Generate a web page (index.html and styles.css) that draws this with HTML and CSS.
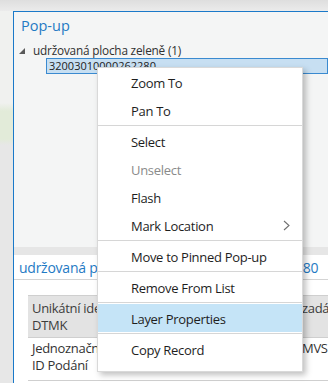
FILE: index.html
```html
<!DOCTYPE html>
<html lang="cs">
<head>
  <meta charset="UTF-8">
  <meta name="viewport" content="width=device-width, initial-scale=1.0">
  <title>Pop-up</title>
  <link rel="stylesheet" href="styles.css">
</head>
<body>
  <div class="topbar"></div>
  <div class="main">
    <div class="map"></div>
    <section class="panel">
      <div class="tree-pane">
        <h1 class="title">Pop-up</h1>
        <div class="tree-row">
          <svg class="twist" width="6" height="6" viewBox="0 0 6 6"><polygon points="6,0 6,6 0,6" fill="#595959"/></svg>
          <span>udržovaná plocha zeleně (1)</span>
        </div>
        <div class="feature-row">
          <span class="feature">32003010000262280</span>
        </div>
      </div>
      <div class="splitter"></div>
      <div class="details">
        <div class="details-title">udržovaná plocha zeleně - 32003010000262280</div>
        <div class="attr-table">
          <div class="cell head">Unikátní identifikátor<br>DTMK</div>
          <div class="cell head">zadání</div>
          <div class="cell">Jednoznačné<br>ID Podání</div>
          <div class="cell">MVS</div>
        </div>
      </div>
    </section>
  </div>

  <ul class="menu">
    <li class="item">Zoom To</li>
    <li class="item">Pan To</li>
    <li class="sep"></li>
    <li class="item">Select</li>
    <li class="item disabled">Unselect</li>
    <li class="item">Flash</li>
    <li class="item">Mark Location
      <svg class="chevron" width="7" height="11" viewBox="0 0 7 11"><path d="M1 1 L6 5.5 L1 10" fill="none" stroke="#707070" stroke-width="1.1"/></svg>
    </li>
    <li class="sep"></li>
    <li class="item">Move to Pinned Pop-up</li>
    <li class="sep"></li>
    <li class="item">Remove From List</li>
    <li class="sep"></li>
    <li class="item active">Layer Properties</li>
    <li class="sep"></li>
    <li class="item">Copy Record</li>
  </ul>
</body>
</html>
```

FILE: styles.css
```css
body {
  margin: 0;
  width: 328px;
  height: 383px;
  overflow: hidden;
  background-color: #e8e8e8;
  font-family: "Open Sans", Arial, sans-serif;
  color: #222;
}
.topbar {
  height: 11px;
  background: linear-gradient(#dedede, #ebebeb);
}
.main {
  display: flex;
  height: 372px;
}
.map {
  flex: 0 0 13px;
  background: linear-gradient(#f0f1ef 0, #f0f1ef 92px, #e2ebd9 100px, #e2ebd9 128px, #e7e7e7 134px);
}
.panel {
  flex: 1;
  min-width: 0;
  overflow: hidden;
  display: flex;
  flex-direction: column;
  border-top: 1px solid #1a79c9;
  border-left: 1px solid #1a79c9;
  background-color: #f4f5f5;
}
.tree-pane {
  height: 235px;
}
.title {
  margin: 0;
  padding: 4px 0 0 7px;
  font-size: 14.5px;
  font-weight: normal;
  line-height: 20px;
  color: #1f7ac4;
}
.tree-row {
  display: flex;
  align-items: center;
  margin-top: 6px;
  padding-left: 5px;
  height: 16px;
  font-size: 11.8px;
  letter-spacing: -0.2px;
  color: #303030;
}
.twist {
  margin-right: 8px;
  margin-top: 1px;
}
.feature-row {
  margin-left: 32px;
  height: 16px;
  box-sizing: border-box;
  border: 1px solid #3a8ad0;
  background-color: #c7dff2;
}
.feature {
  display: block;
  padding-left: 2px;
  font-size: 11px;
  line-height: 14px;
  color: #222;
}
.splitter {
  height: 8px;
  background-color: #e6e6e6;
}
.details {
  flex: 1;
  background-color: #fff;
}
.details-title {
  padding: 3px 0 1px 5px;
  font-size: 14px;
  letter-spacing: -0.25px;
  line-height: 20px;
  color: #1f7ac4;
  white-space: nowrap;
  border-bottom: 1px solid #d4d4d4;
}
.attr-table {
  display: grid;
  grid-template-columns: 270px 60px;
  margin: 15px 0 0 14px;
  border-top: 1px solid #cfcfcf;
  border-bottom: 1px solid #cfcfcf;
}
.cell {
  padding: 2px 4px 6px;
  font-size: 13px;
  letter-spacing: -0.3px;
  line-height: 17px;
  color: #333;
  white-space: nowrap;
  overflow: hidden;
}
.cell.head {
  padding: 4px 4px 3px;
  background-color: #e3e3e3;
  color: #3d3d3d;
  border-bottom: 1px solid #cfcfcf;
}
.menu {
  position: absolute;
  left: 97px;
  top: 67px;
  width: 206px;
  box-sizing: border-box;
  margin: 0;
  padding: 0 0 8px;
  list-style: none;
  background-color: #fff;
  border: 1px solid #d9d9d9;
  box-shadow: 3px 3px 6px rgba(0, 0, 0, 0.25);
}
.item {
  display: flex;
  align-items: center;
  justify-content: space-between;
  height: 28px;
  padding: 1px 12px 0 33px;
  box-sizing: border-box;
  font-size: 13px;
  letter-spacing: -0.3px;
  color: #1e1e1e;
}
.item.disabled {
  color: #8a8a8a;
}
.item.active {
  background-color: #c5e4f7;
}
.sep {
  height: 1px;
  margin: 1px 0;
  background-color: #d6d6d6;
}
```
